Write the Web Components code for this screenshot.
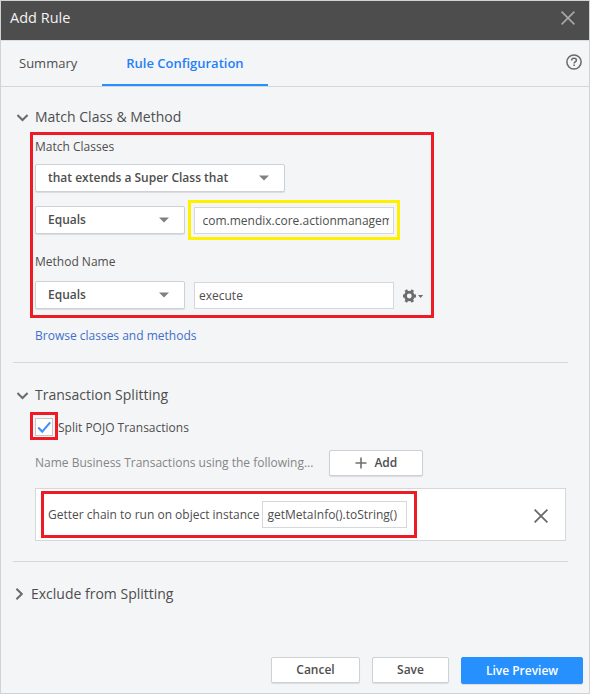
<!DOCTYPE html>
<html lang="en">
<head>
<meta charset="utf-8">
<title>Add Rule</title>
<style>
body{margin:0;font:12px/16px "Open Sans",sans-serif;color:#4e4e4e}
</style>
</head>
<body>
<rule-dialog></rule-dialog>
<script>
const define = (name, html) => customElements.define(name, class extends HTMLElement {
  connectedCallback() {
    if (this.shadowRoot) return;
    const t = document.createElement('template');
    t.innerHTML = html;
    this.attachShadow({ mode: 'open' }).append(t.content.cloneNode(true));
  }
});

define('ui-select', `<style>
:host{display:flex;box-sizing:border-box;width:150px;height:28px;align-items:center;justify-content:space-between;padding:0 15px 1px 12px;background:#fff;border:1px solid #cdd1d6;border-radius:2px;box-shadow:0 1px 1px #0000001a;font-weight:600}
svg{display:block}
</style><slot></slot><svg width="10" height="6"><path d="M0 .5h10L5 5.5z" fill="#808080"/></svg>`);

define('ui-input', `<style>
:host{display:flex;box-sizing:border-box;width:200px;height:27px;align-items:center;padding:0 4px;background:#fff;border:1px solid #d5d7d9}
span{overflow:hidden;white-space:nowrap;flex:1}
</style><span><slot></slot></span>`);

define('ui-button', `<style>
:host{display:flex;box-sizing:border-box;height:26px;align-items:center;justify-content:center;gap:7px;padding-bottom:1px;background:#fff;border:1px solid #cdd1d6;border-radius:2px;box-shadow:0 1px 1px #0000001a;font-weight:600}
:host([primary]){height:27px;padding-bottom:0;background:#2690ff;border-color:#2690ff;color:#fff}
</style><slot></slot>`);

define('ui-mark', `<style>
:host{display:block;position:relative;width:fit-content}
i{position:absolute;inset:var(--inset);border:3px solid var(--mark,#ee1b24);pointer-events:none}
</style><slot></slot><i></i>`);

define('ui-section', `<style>
:host{display:block}
header{display:flex;align-items:center;height:20px;gap:6px;padding-left:16px;font-size:14px;line-height:20px}
:host([closed]) header{gap:8px;padding-left:14px}
svg{display:block;fill:none;stroke:#6a6a6a;stroke-width:2}
.down{margin-top:2px}
.body{padding-left:34px}
:host([closed]) .down,:host(:not([closed])) .right,:host([closed]) .body{display:none}
</style>
<header><svg class="down" width="12" height="8"><path d="M.4 1l5.1 5 5.1-5"/></svg><svg class="right" width="8" height="12"><path d="M1.4.7L6.8 6 1.4 11.3"/></svg><slot name="title"></slot></header>
<div class="body"><slot></slot></div>`);

define('ui-tabs', `<style>
:host{display:flex;box-sizing:border-box;height:46px;border-bottom:1px solid #d3d5d8;font-size:13px;line-height:44px;align-items:flex-start}
.t{height:45px;box-sizing:border-box;padding:0 25px 0 18px}
.on{padding:0 0 0 24px;width:166px;color:#1f80fa;font-weight:600;border-bottom:2px solid #2690ff}
svg{margin:13px 7px 0 auto}
</style><div class="t">Summary</div><div class="t on">Rule Configuration</div>
<svg width="16" height="16" fill="none" stroke="#686868"><circle cx="8" cy="8" r="7.1" stroke-width="1.5"/><path d="M5.6 6.4c0-1.5 1-2.2 2.4-2.2s2.4.8 2.4 2c0 1.6-2.3 1.7-2.3 3.3" stroke-width="1.5"/><path d="M8.1 10.6v1.5" stroke-width="1.6"/></svg>`);

define('ui-titlebar', `<style>
:host{display:flex;box-sizing:border-box;height:40px;padding:0 14px 5px 9px;align-items:center;justify-content:space-between;background:#4d4d4d;border-bottom:1px solid #dcdedf;color:#f2f2f2;font-size:14.5px}
</style><slot></slot><svg width="14" height="14" stroke="#aaa" stroke-width="1.5"><path d="M.6.6l12.8 12.8M13.4.6L.6 13.4"/></svg>`);

define('rule-dialog', `<style>
:host{display:flex;flex-direction:column;box-sizing:border-box;width:590px;height:694px;border:1px solid #d0d2d3;background:#f4f5f7}
.row{display:flex;align-items:center}
.gap{gap:9px}
hr{border:0;height:1px;background:#d5d7da;margin:0 20px 0 12px;width:555px}
.wide{width:250px}
.m1{--inset:-7px -10px -9px -5px}
.m2{--inset:-7px -6px -6px -6px;--mark:#fff000}
.m3{--inset:-6px -5px -4px -5px}
.m4{--inset:-10px -10px -10px -7px}
.link{color:#3f6fc9}
.box{width:18px;height:18px;box-sizing:border-box;border:1px solid #c4c6c8;background:#fff}
.box svg,.gear svg{display:block}
.gear{margin-top:2px}
.drop{padding-top:2px}
.card{box-sizing:border-box;width:531px;height:53px;margin-top:12px;padding:0 17px 0 12px;border:1px solid #d5d7d9;background:#fff;justify-content:space-between}
footer{display:flex;gap:12px;margin:auto 6px 9px;justify-content:flex-end;align-items:flex-start}
</style>
<ui-titlebar>Add Rule</ui-titlebar>
<ui-tabs></ui-tabs>
<ui-section style="margin-top:20px"><span slot="title">Match Class &amp; Method</span>
 <ui-mark class="m1" style="margin-top:12px">
  <div style="height:15px;line-height:15px">Match Classes</div>
  <ui-select class="wide" style="margin-top:10px">that extends a Super Class that</ui-select>
  <div class="row gap" style="margin-top:14px"><ui-select>Equals</ui-select><ui-mark class="m2" style="margin-top:1px"><ui-input style="padding-left:7.5px">com.mendix.core.actionmanagement</ui-input></ui-mark></div>
  <div style="margin-top:20px">Method Name</div>
  <div class="row gap" style="margin-top:11px"><ui-select>Equals</ui-select><ui-input style="margin-top:1px">execute</ui-input>
   <div class="gear"><svg width="21" height="14"><g fill="none" stroke="#6c6c6c"><circle cx="6.3" cy="7" r="3.9" stroke-width="2.9"/><path stroke-width="2.8" d="M-.4 7h2M11 7h2M2.8 1l1.3 2.2M9.8 1L8.5 3.2M2.8 13l1.3-2.2M9.8 13L8.5 10.8"/></g><path d="M15 6h5.2l-2.6 2.9z" fill="#6c6c6c"/></svg></div></div>
 </ui-mark>
 <div class="link" style="margin-top:19px">Browse classes and methods</div>
</ui-section>
<hr style="margin-top:18px">
<ui-section style="margin-top:22px"><span slot="title">Transaction Splitting</span>
 <div class="row" style="margin-top:13px;gap:5px"><ui-mark class="m3"><div class="box"><svg width="16" height="16"><path d="M2.2 8.6l4 4 8-9.2" fill="none" stroke="#4190f7" stroke-width="2.1"/></svg></div></ui-mark><span class="drop">Split POJO Transactions</span></div>
 <div class="row" style="margin-top:14px;gap:16px"><span style="color:#858585">Name Business Transactions using the following...</span><ui-button style="width:94px"><svg width="12" height="12" stroke="#707070" stroke-width="1.6"><path d="M6 .5v11M.5 6h11"/></svg><span>Add</span></ui-button></div>
 <div class="row card"><ui-mark class="m4"><div class="row" style="gap:3px"><span>Getter chain to run on object instance</span><ui-input style="width:145px">getMetaInfo().toString()</ui-input></div></ui-mark><svg width="14" height="14" style="margin-top:3px" stroke="#6a6a6a" stroke-width="1.8"><path d="M.6.6l12.8 12.8M13.4.6L.6 13.4"/></svg></div>
</ui-section>
<hr style="margin-top:20px">
<ui-section closed style="margin-top:22px"><span slot="title">Exclude from Splitting</span></ui-section>
<footer><ui-button style="width:89px">Cancel</ui-button><ui-button style="width:77px">Save</ui-button><ui-button primary style="width:122px">Live Preview</ui-button></footer>`);
</script>
</body>
</html>
